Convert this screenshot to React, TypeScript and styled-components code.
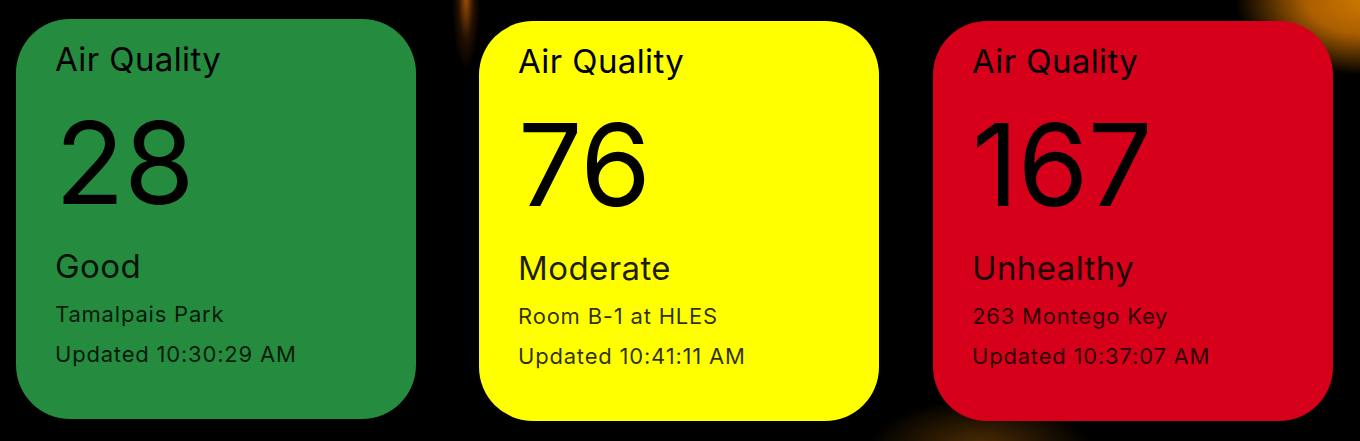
import React from "react";
import styled, { createGlobalStyle } from "styled-components";

const Global = createGlobalStyle`
  html, body { margin: 0; padding: 0; }
  body {
    width: 1360px;
    height: 441px;
    overflow: hidden;
    background: #000;
    font-family: Inter, "Noto Sans", sans-serif;
  }
`;

const Stage = styled.main`
  width: 1360px;
  height: 441px;
  display: flex;
  align-items: flex-start;
  padding-top: 19px;
  box-sizing: border-box;
  background:
    radial-gradient(ellipse 14px 70px at 466px 0px, rgba(190, 95, 10, 0.8), rgba(120, 55, 5, 0.3) 55%, rgba(0,0,0,0) 100%),
    radial-gradient(ellipse 130px 75px at 1365px 0px, rgba(205, 120, 0, 1) 0%, rgba(190, 105, 0, 0.9) 45%, rgba(0,0,0,0) 100%),
    radial-gradient(ellipse 110px 45px at 980px 445px, rgba(95, 55, 5, 0.8), rgba(0,0,0,0) 100%),
    #000;
`;

const Card = styled.section<{ $bg: string; $left: number; $top: number }>`
  width: 400px;
  height: 400px;
  margin-left: ${(p) => p.$left}px;
  margin-top: ${(p) => p.$top}px;
  flex: none;
  box-sizing: border-box;
  border-radius: 54px;
  background: ${(p) => p.$bg};
  padding: 20px 0 0 39px;
  display: flex;
  flex-direction: column;
  color: #000;
`;

const Title = styled.div`
  font-size: 33px;
  line-height: 40px;
  font-weight: 400;
  letter-spacing: 0.4px;
`;

const Value = styled.div`
  margin-top: 27px;
  font-size: 114px;
  line-height: 114px;
  font-weight: 400;
  letter-spacing: -0.5px;
`;

const Status = styled.div`
  margin-top: 26px;
  font-size: 33px;
  line-height: 40px;
  font-weight: 400;
  letter-spacing: 0.4px;
  color: rgba(0, 0, 0, 0.88);
`;

const Details = styled.div`
  margin-top: 8px;
  display: flex;
  flex-direction: column;
`;

const DetailLine = styled.div`
  font-size: 22px;
  line-height: 40px;
  font-weight: 400;
  letter-spacing: 0.8px;
  color: rgba(0, 0, 0, 0.82);
`;

type Reading = {
  value: string;
  status: string;
  place: string;
  updated: string;
  bg: string;
  left: number;
  top: number;
};

const readings: Reading[] = [
  { value: "28", status: "Good", place: "Tamalpais Park", updated: "Updated 10:30:29 AM", bg: "#248b3f", left: 16, top: 0 },
  { value: "76", status: "Moderate", place: "Room B-1 at HLES", updated: "Updated 10:41:11 AM", bg: "#ffff00", left: 63, top: 2 },
  { value: "167", status: "Unhealthy", place: "263 Montego Key", updated: "Updated 10:37:07 AM", bg: "#d7001a", left: 54, top: 2 },
];

export default function App() {
  return (
    <>
      <Global />
      <Stage>
        {readings.map((r) => (
          <Card key={r.value} $bg={r.bg} $left={r.left} $top={r.top}>
            <Title>Air Quality</Title>
            <Value>{r.value}</Value>
            <Status>{r.status}</Status>
            <Details>
              <DetailLine>{r.place}</DetailLine>
              <DetailLine>{r.updated}</DetailLine>
            </Details>
          </Card>
        ))}
      </Stage>
    </>
  );
}
